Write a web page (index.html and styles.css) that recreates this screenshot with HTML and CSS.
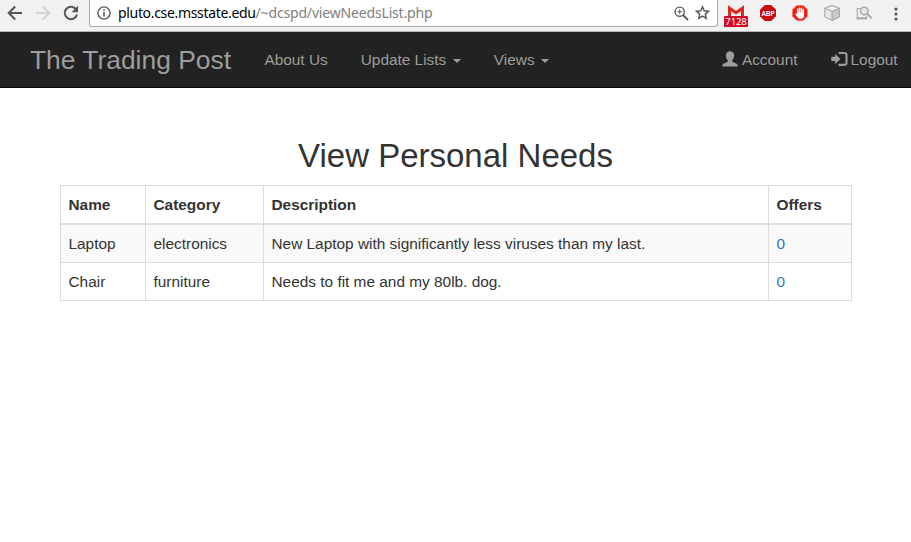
FILE: index.html
```html
<!DOCTYPE html>
<html lang="en">
<head>
<meta charset="utf-8">
<title>The Trading Post</title>
<link rel="stylesheet" href="styles.css">
</head>
<body>
<header class="toolbar">
  <div class="controls">
    <svg width="16" height="16" viewBox="0 0 16 16" fill="none" stroke="#555" stroke-width="2"><path d="M15 8H2M8.2 1.5 1.7 8l6.5 6.5"/></svg>
    <svg width="16" height="16" viewBox="0 0 16 16" fill="none" stroke="#d3d3d3" stroke-width="2"><path d="M1 8h13M7.8 1.5 14.3 8l-6.5 6.5"/></svg>
    <svg width="16" height="16" viewBox="0 0 16 16"><path d="M13.2 4.6A6.2 6.2 0 1 0 14 9.4" fill="none" stroke="#555" stroke-width="2"/><path d="M15 .8v6.4H8.6z" fill="#555"/></svg>
  </div>
  <div class="address">
    <svg class="info" width="14" height="14" viewBox="0 0 14 14"><circle cx="7" cy="7" r="6.1" fill="none" stroke="#5a5a5a" stroke-width="1.4"/><path d="M7 6v4.6M7 3.3v1.6" stroke="#5a5a5a" stroke-width="1.6"/></svg>
    <div class="url"><span class="host">pluto.cse.msstate.edu</span><span class="path">/~dcspd/viewNeedsList.php</span></div>
    <svg class="magnify" width="15" height="15" viewBox="0 0 15 15" fill="none" stroke="#5a5a5a"><circle cx="5.7" cy="5.7" r="4.6" stroke-width="1.4"/><path d="m9 9 5 5" stroke-width="1.9"/><path d="M3.3 5.7h4.8M5.7 3.3v4.8"/></svg>
    <svg class="star" width="15" height="15" viewBox="0 0 15 15"><path d="m7.5 1.8 1.7 4 4.4.4-3.3 2.9 1 4.3-3.8-2.3-3.8 2.3 1-4.3-3.3-2.9 4.4-.4z" fill="none" stroke="#555" stroke-width="1.4"/></svg>
  </div>
  <div class="extensions">
    <div class="mail">
      <svg width="16" height="9" viewBox="0 0 16 9"><path d="M0 0h16v9H0z" fill="#eee"/><path d="M1.5 9V1.2L8 5.7l6.5-4.5V9" fill="none" stroke="#df2920" stroke-width="3"/></svg>
      <span class="count">7128</span>
    </div>
    <svg class="abp" width="16" height="16" viewBox="0 0 16 16"><path d="M4.8 0h6.4L16 4.8v6.4L11.2 16H4.8L0 11.2V4.8z" fill="#c70d0d"/><text x="8" y="10.9" text-anchor="middle" textLength="13" lengthAdjust="spacingAndGlyphs">ABP</text></svg>
    <svg class="hand" width="16" height="16" viewBox="0 0 16 16"><path d="M4.8.5h6.4l4.3 4.3v6.4l-4.3 4.3H4.8L.5 11.2V4.8z" fill="#ed1c16" stroke="#f7766e"/><path d="M5.7 8V4.1M7.6 8V2.9M9.5 8V3.3M11.3 9V4.8" stroke="#fff" stroke-width="1.5" stroke-linecap="round"/><path d="M5 7.5h7v3.2c0 1.7-1 3.1-2.7 3.1H8c-1.5 0-2.2-.7-3-2L3.2 9.2c-.2-.9.7-1.1 1.3-.4l.5.6z" fill="#fff"/></svg>
    <svg class="cube" width="16" height="16" viewBox="0 0 16 16" stroke="#a4a4a4" stroke-linejoin="round"><path d="m8 .6 7.2 2.7v8.6L8 15.4.8 11.9V3.3z" fill="#e6e6e6"/><path d="M8 6.2v9.2l7.2-3.5V3.3z" fill="#c9c9c9"/><path d="M.8 3.3 8 6.2l7.2-2.9L8 .6z" fill="#f3f3f3"/></svg>
    <svg class="search" width="17" height="14" viewBox="0 0 17 14" fill="none" stroke="#aaa"><path d="M5 2.5H1.3v9.3h9.2V10" stroke-width="1.2"/><path d="M.5 12.5H11" stroke-width="2"/><circle cx="8.3" cy="5" r="3.8" fill="#e6e6e6" stroke-width="1.5"/><path d="m11 7.7 4.8 4.5" stroke-width="2.2"/></svg>
    <svg class="dots" width="4" height="14" viewBox="0 0 4 14" fill="#555"><circle cx="2" cy="2" r="1.6"/><circle cx="2" cy="7" r="1.6"/><circle cx="2" cy="12" r="1.6"/></svg>
  </div>
</header>
<nav class="navbar">
  <a class="brand">The Trading Post</a>
  <a class="link">About Us</a>
  <a class="link">Update Lists<i class="caret"></i></a>
  <a class="link">Views<i class="caret"></i></a>
  <div class="account">
    <a class="link"><svg width="16" height="16" viewBox="0 0 16 16" fill="#9d9d9d"><path d="M8 .3c2.6 0 4.1 1.7 4.1 4.2 0 2.2-.8 3.5-1.8 4.7v1.5l4.2 2.1c.9.5 1.3.9 1.3 2.8H.2c0-1.9.4-2.3 1.3-2.8l4.2-2.1V9.2C4.7 8 3.9 6.7 3.9 4.5 3.9 2 5.4.3 8 .3z"/></svg>Account</a>
    <a class="link logout"><svg width="17" height="16" viewBox="0 0 17 16"><path d="M.3 5.8h3.8V2.9L9.6 8l-5.5 5v-2.9H.3z" fill="#9d9d9d"/><path d="M7.5 2h5.7c1.4 0 2.3.8 2.3 2.1v7.7c0 1.3-.9 2.1-2.3 2.1H7.5" fill="none" stroke="#9d9d9d" stroke-width="2.1"/></svg>Logout</a>
  </div>
</nav>
<main>
  <h1>View Personal Needs</h1>
  <table>
    <colgroup><col class="name"><col class="category"><col class="description"><col class="offers"></colgroup>
    <thead><tr><th>Name</th><th>Category</th><th>Description</th><th>Offers</th></tr></thead>
    <tbody>
      <tr><td>Laptop</td><td>electronics</td><td>New Laptop with significantly less viruses than my last.</td><td><a>0</a></td></tr>
      <tr><td>Chair</td><td>furniture</td><td>Needs to fit me and my 80lb. dog.</td><td><a>0</a></td></tr>
    </tbody>
  </table>
</main>
</body>
</html>
```
FILE: styles.css
```css
* { box-sizing: border-box; }
body { margin: 0; background: #fff; color: #333; font: 15.4px/22px "Liberation Sans", Arial, sans-serif; overflow: hidden; }
svg { display: block; flex: none; overflow: visible; }
.toolbar { height: 32px; display: flex; align-items: flex-start; background: #f1f1f1; border-bottom: 1px solid #b5b8b8; }
.controls { width: 89px; padding: 5px 0 0 7px; display: flex; gap: 12px; }
.address { width: 629px; height: 27px; display: flex; align-items: flex-start; padding: 0 7px; background: #fff; border: 1px solid #a9a9a9; border-top: 0; border-radius: 0 0 3px 3px; }
.info { margin-top: 6px; }
.url { flex: 1; margin-left: 7px; font: 14px/26px "Noto Sans", sans-serif; white-space: nowrap; }
.host { color: #000; letter-spacing: -.33px; }
.path { color: #808080; letter-spacing: -.17px; }
.magnify { margin: 6px 6px 0 0; }
.star { margin-top: 5px; }
.extensions { flex: 1; display: flex; align-items: flex-start; padding-left: 6px; }
.mail { width: 24px; display: flex; flex-direction: column; align-items: center; padding-top: 7px; }
.count { width: 24px; height: 11px; background: #d40b28; color: #fff; border-radius: 1px; font: 9.5px/11px "Noto Sans", sans-serif; text-align: center; letter-spacing: -.1px; }
.abp { margin: 5px 0 0 12px; }
.abp text { font: bold 8px "Liberation Sans", sans-serif; fill: #fff; }
.hand { margin: 5px 0 0 16px; }
.cube { margin: 5px 0 0 16px; }
.search { margin: 6px 0 0 16px; }
.dots { margin: 7px 0 0 21px; }
.navbar { height: 56px; display: flex; align-items: center; padding: 0 13.4px 0 30px; background: #222; border-bottom: 1px solid #080808; color: #9d9d9d; }
.brand { width: 234.4px; font-size: 26.4px; line-height: 30px; white-space: nowrap; }
.link { display: flex; align-items: center; margin-right: 33px; white-space: nowrap; }
.caret { margin: 2px 0 0 6.6px; border: 4.4px solid transparent; border-top-color: #9d9d9d; border-bottom: 0; }
.account { display: flex; margin-left: auto; }
.account svg { margin: -2px 4px 0 0; }
.account .logout { margin-right: 0; }
.logout svg { margin-right: 3px; }
main { width: 792px; margin: 50px 0 0 60px; }
h1 { margin: 0 1px 11px 0; font-size: 33px; line-height: 36px; font-weight: 500; text-align: center; }
table { width: 792px; table-layout: fixed; border-collapse: separate; border-spacing: 0; border: solid #ddd; border-width: 1px 0 0 1px; }
.name { width: 85px; }
.category { width: 118px; }
.description { width: 505px; }
.offers { width: 83px; }
th, td { height: 38px; padding: 0 7.5px; border: solid #ddd; border-width: 0 1px 1px 0; text-align: left; vertical-align: middle; }
th { height: 39px; border-bottom-width: 2px; }
tbody tr:first-child { background: #f9f9f9; }
td a { color: #337ab7; }
```
